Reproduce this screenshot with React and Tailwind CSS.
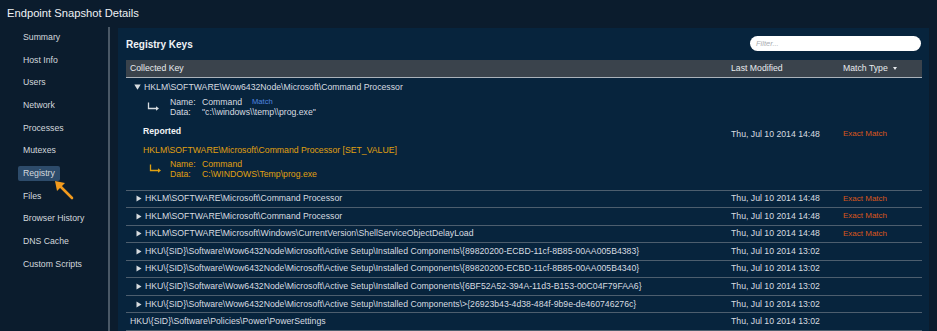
import React from "react";

const navItems = [
  "Summary",
  "Host Info",
  "Users",
  "Network",
  "Processes",
  "Mutexes",
  "Registry",
  "Files",
  "Browser History",
  "DNS Cache",
  "Custom Scripts",
];

const rows = [
  { key: "HKLM\\SOFTWARE\\Microsoft\\Command Processor", date: "Thu, Jul 10 2014 14:48", match: true },
  { key: "HKLM\\SOFTWARE\\Microsoft\\Command Processor", date: "Thu, Jul 10 2014 14:48", match: true },
  { key: "HKLM\\SOFTWARE\\Microsoft\\Windows\\CurrentVersion\\ShellServiceObjectDelayLoad", date: "Thu, Jul 10 2014 14:48", match: true },
  { key: "HKU\\{SID}\\Software\\Wow6432Node\\Microsoft\\Active Setup\\Installed Components\\{89820200-ECBD-11cf-8B85-00AA005B4383}", date: "Thu, Jul 10 2014 13:02" },
  { key: "HKU\\{SID}\\Software\\Wow6432Node\\Microsoft\\Active Setup\\Installed Components\\{89820200-ECBD-11cf-8B85-00AA005B4340}", date: "Thu, Jul 10 2014 13:02" },
  { key: "HKU\\{SID}\\Software\\Wow6432Node\\Microsoft\\Active Setup\\Installed Components\\{6BF52A52-394A-11d3-B153-00C04F79FAA6}", date: "Thu, Jul 10 2014 13:02" },
  { key: "HKU\\{SID}\\Software\\Wow6432Node\\Microsoft\\Active Setup\\Installed Components\\>{26923b43-4d38-484f-9b9e-de460746276c}", date: "Thu, Jul 10 2014 13:02" },
  { key: "HKU\\{SID}\\Software\\Policies\\Power\\PowerSettings", date: "Thu, Jul 10 2014 13:02", noArrow: true },
];

function ReturnArrow({ color }) {
  return (
    <svg width="13" height="10" viewBox="0 0 13 10" className="shrink-0">
      <path d="M1.5 0.5 V6.5 H10" fill="none" stroke={color} strokeWidth="1.3" />
      <path d="M9 4.3 L12 6.5 L9 8.7 Z" fill={color} />
    </svg>
  );
}

function RightTri() {
  return (
    <svg width="6" height="7" viewBox="0 0 6 7" className="shrink-0">
      <path d="M0.5 0.5 L5.5 3.5 L0.5 6.5 Z" fill="#d7dce0" />
    </svg>
  );
}

function DownTri() {
  return (
    <svg width="7" height="6" viewBox="0 0 7 6" className="shrink-0">
      <path d="M0.3 0.5 L6.7 0.5 L3.5 5.7 Z" fill="#d7dce0" />
    </svg>
  );
}

export default function App() {
  return (
    <div
      className="w-[937px] h-[331px] overflow-hidden bg-[#0b1c2d] text-[#d7dce0] flex flex-col"
      style={{ fontFamily: '"Liberation Sans", Arial, sans-serif' }}
    >
      {/* title */}
      <div className="h-[27px] shrink-0 flex items-center pl-[7px] text-[11.2px] text-[#eef1f4]">
        Endpoint Snapshot Details
      </div>

      <div className="flex flex-1 min-h-0">
        {/* sidebar */}
        <div className="w-[108px] shrink-0 relative flex flex-col text-[8.7px] text-[#d3d8dd] mt-[-1px]">
          {navItems.map((n) => (
            <div key={n} className="h-[22.7px] flex items-center shrink-0">
              <span
                className={
                  n === "Registry"
                    ? "ml-[18px] px-[5px] h-[15px] flex items-center rounded-[2px] bg-[#2d4b6a]"
                    : "ml-[23px]"
                }
              >
                {n}
              </span>
            </div>
          ))}
          <svg
            width="24"
            height="24"
            viewBox="0 0 24 24"
            className="absolute left-[52px] top-[152px]"
          >
            <path d="M20 20 L7 7" stroke="#f29a1d" strokeWidth="2.6" strokeLinecap="round" />
            <path d="M3 3 L13 5 L5 13 Z" fill="#f29a1d" />
          </svg>
        </div>
        <div className="w-[2px] shrink-0 bg-[#4a5866]" />
        <div className="w-[8px] shrink-0" />

        {/* main panel */}
        <div className="w-[811px] shrink-0 bg-[#07243d] mt-[1px] pl-[8px] pr-[7px] flex flex-col">
          <div className="h-[32px] shrink-0 flex items-center justify-between pt-[1px]">
            <div className="text-[10px] font-bold text-[#f0f3f6]">Registry Keys</div>
            <div className="w-[171px] h-[15px] rounded-full bg-white flex items-center pl-[6px] mr-[1px] mt-[-2px]">
              <span className="text-[7.5px] italic text-[#a9adb1]">Filter...</span>
            </div>
          </div>

          {/* header */}
          <div className="h-[18px] shrink-0 grid grid-cols-[601px_112px_83px] bg-[#3a434c] border-b border-[#aab2ba] text-[8.7px] text-[#e8ebee] items-center">
            <div className="pl-[4px]">Collected Key</div>
            <div className="pl-[4px]">Last Modified</div>
            <div className="pl-[4px] flex items-center gap-[5px]">
              Match Type
              <svg width="4" height="3" viewBox="0 0 4 3">
                <path d="M0 0 H4 L2 3 Z" fill="#e8ebee" />
              </svg>
            </div>
          </div>

          {/* expanded row */}
          <div className="h-[112.5px] shrink-0 grid grid-cols-[601px_112px_83px] border-b-[1.5px] border-[#4d5e6e] text-[8.7px] leading-[10px] items-center">
            <div className="self-stretch flex flex-col pt-[4px]">
              <div className="flex items-center pl-[8px] gap-[2px]">
                <DownTri />
                <span className="pl-[1px]">HKLM\SOFTWARE\Wow6432Node\Microsoft\Command Processor</span>
              </div>
              <div className="flex items-center mt-[5px] pl-[21px]">
                <div className="w-[23px] flex items-center">
                  <ReturnArrow color="#d7dce0" />
                </div>
                <div className="flex flex-col">
                  <div className="flex">
                    <span className="w-[32px]">Name:</span>
                    <span className="w-[50px]">Command</span>
                    <span className="text-[7.6px] text-[#4f86e0]">Match</span>
                  </div>
                  <div className="flex">
                    <span className="w-[32px]">Data:</span>
                    <span>"c:\\windows\\temp\\prog.exe"</span>
                  </div>
                </div>
              </div>
              <div className="mt-[9px] pl-[17px] font-bold text-[#f2f4f6]">Reported</div>
              <div className="mt-[9px] pl-[17px] text-[#e0a011]">
                HKLM\SOFTWARE\Microsoft\Command Processor [SET_VALUE]
              </div>
              <div className="flex items-center mt-[4px] pl-[23px] text-[#e0a011]">
                <div className="w-[21px] flex items-center">
                  <ReturnArrow color="#e0a011" />
                </div>
                <div className="flex flex-col">
                  <div className="flex">
                    <span className="w-[32px]">Name:</span>
                    <span>Command</span>
                  </div>
                  <div className="flex">
                    <span className="w-[32px]">Data:</span>
                    <span>C:\WINDOWS\Temp\prog.exe</span>
                  </div>
                </div>
              </div>
            </div>
            <div className="pl-[4px]">Thu, Jul 10 2014 14:48</div>
            <div className="pl-[4px] text-[8px] text-[#da561c]">Exact Match</div>
          </div>

          {rows.map((r, i) => (
            <div
              key={i}
              className="h-[17.55px] shrink-0 grid grid-cols-[601px_112px_83px] border-b-[1.5px] border-[#4d5e6e] text-[8.7px] items-center"
            >
              {r.noArrow ? (
                <div className="pl-[4px] whitespace-nowrap">{r.key}</div>
              ) : (
                <div className="pl-[10px] flex items-center gap-[3px] whitespace-nowrap">
                  <RightTri />
                  <span>{r.key}</span>
                </div>
              )}
              <div className="pl-[4px]">{r.date}</div>
              <div className="pl-[4px] text-[8px] text-[#da561c]">{r.match ? "Exact Match" : ""}</div>
            </div>
          ))}
        </div>
      </div>
    </div>
  );
}
